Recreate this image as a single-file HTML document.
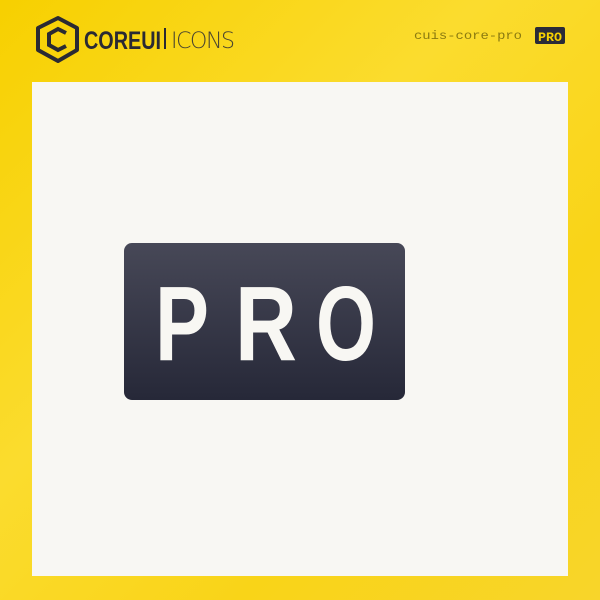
<!DOCTYPE html>
<html><head><style>
body{margin:0;width:600px;height:600px;overflow:hidden;background:linear-gradient(135deg,#f7d000 0%,#fbdc2e 40%,#f9d418 70%,#f8d52a 100%);font-family:"Liberation Sans",sans-serif;position:relative}
.panel{position:absolute;left:32px;top:82px;width:536px;height:494px;background:#f8f7f3}
</style></head><body>
<svg style="position:absolute;left:0;top:0" width="600" height="600">
<polygon points="58,18 77,28 77,50 58,61 38,50 38,28" fill="none" stroke="#2a2a33" stroke-width="4" stroke-linejoin="round"/>
<path d="M66,33 L58,29 L49,34 L49,45 L58,50 L66,46" fill="none" stroke="#2a2a33" stroke-width="4"/>
<text x="84" y="49" font-family="Liberation Sans" font-weight="bold" font-size="25" fill="#2a2a33" textLength="77" lengthAdjust="spacingAndGlyphs">COREUI</text>
<rect x="164" y="28" width="2" height="21" fill="#2a2a33"/>
<text x="171" y="48" font-family="DejaVu Sans" font-weight="200" font-size="22" fill="#4a4630" textLength="64" lengthAdjust="spacing">ICONS</text>
<text x="414" y="39" font-family="Liberation Mono" font-size="12" fill="#8a7a10" textLength="108" lengthAdjust="spacingAndGlyphs">cuis-core-pro</text>
<rect x="535" y="27" width="30" height="17" rx="2" fill="#2a2b38"/>
<text x="538" y="41" font-family="Liberation Mono" font-weight="bold" font-size="13" fill="#f7d000" textLength="24" lengthAdjust="spacingAndGlyphs">PRO</text>
</svg>
<div class="panel"></div>
<svg style="position:absolute;left:0;top:0" width="600" height="600">
<defs><linearGradient id="g" x1="0" y1="0" x2="0" y2="1"><stop offset="0" stop-color="#474857"/><stop offset="1" stop-color="#262838"/></linearGradient></defs>
<rect x="124" y="243" width="281" height="157" rx="8" fill="url(#g)"/>
<g font-family="Liberation Sans" font-weight="bold" font-size="106" fill="#f8f7f3">
<text x="155" y="360" textLength="54" lengthAdjust="spacingAndGlyphs">P</text>
<text x="235" y="360" textLength="62" lengthAdjust="spacingAndGlyphs">R</text>
<text x="316" y="360" textLength="60" lengthAdjust="spacingAndGlyphs">O</text>
</g>
</svg>
</body></html>
